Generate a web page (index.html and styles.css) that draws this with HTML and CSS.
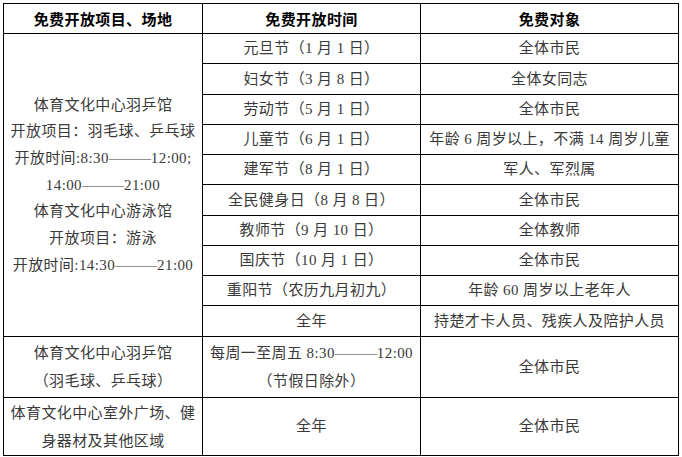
FILE: index.html
```html
<!DOCTYPE html>
<html lang="zh-CN">
<head>
<meta charset="utf-8">
<link rel="stylesheet" href="styles.css">
</head>
<body>
<div class="sheet">
  <div class="cell head">免费开放项目、场地</div>
  <div class="cell head">免费开放时间</div>
  <div class="cell head">免费对象</div>

  <div class="cell venue">
    <div>体育文化中心羽乒馆</div>
    <div>开放项目：羽毛球、乒乓球</div>
    <div>开放时间:8:30<span class="dash">——</span>12:00;</div>
    <div>14:00<span class="dash">——</span>21:00</div>
    <div>体育文化中心游泳馆</div>
    <div>开放项目：游泳</div>
    <div>开放时间:14:30<span class="dash">——</span>21:00</div>
  </div>

  <div class="cell">元旦节（1 月 1 日）</div><div class="cell">全体市民</div>
  <div class="cell">妇女节（3 月 8 日）</div><div class="cell">全体女同志</div>
  <div class="cell">劳动节（5 月 1 日）</div><div class="cell">全体市民</div>
  <div class="cell">儿童节（6 月 1 日）</div><div class="cell">年龄 6 周岁以上，不满 14 周岁儿童</div>
  <div class="cell">建军节（8 月 1 日）</div><div class="cell">军人、军烈属</div>
  <div class="cell">全民健身日（8 月 8 日）</div><div class="cell">全体市民</div>
  <div class="cell">教师节（9 月 10 日）</div><div class="cell">全体教师</div>
  <div class="cell">国庆节（10 月 1 日）</div><div class="cell">全体市民</div>
  <div class="cell">重阳节（农历九月初九）</div><div class="cell">年龄 60 周岁以上老年人</div>
  <div class="cell">全年</div><div class="cell">持楚才卡人员、残疾人及陪护人员</div>

  <div class="cell multi"><div>体育文化中心羽乒馆</div><div>（羽毛球、乒乓球）</div></div>
  <div class="cell multi"><div>每周一至周五 8:30<span class="dash">——</span>12:00</div><div>（节假日除外）</div></div>
  <div class="cell">全体市民</div>

  <div class="cell multi"><div>体育文化中心室外广场、健</div><div>身器材及其他区域</div></div>
  <div class="cell">全年</div>
  <div class="cell">全体市民</div>
</div>
</body>
</html>
```

FILE: styles.css
```css
html, body {
  margin: 0;
  padding: 0;
  background: #ffffff;
}

body {
  padding: 3px 0 0 3px;
}

.sheet {
  display: grid;
  grid-template-columns: 199px 218px 258px;
  grid-template-rows: 30px 30px 31px 30px 30px 30px 31px 30px 30px 30px 31px 61px 58px;
  width: 676px;
  box-sizing: border-box;
  border-top: 1px solid #000;
  border-left: 1px solid #000;
  font-family: "Liberation Serif", "Noto Sans CJK SC", serif;
  font-size: 15px;
  color: #3a3a3a;
  letter-spacing: 0.4px;
}

.cell {
  box-sizing: border-box;
  border-right: 1px solid #000;
  border-bottom: 1px solid #000;
  display: flex;
  flex-direction: column;
  align-items: center;
  justify-content: center;
  text-align: center;
  white-space: nowrap;
  line-height: 27px;
  overflow: hidden;
}

.head {
  font-family: "Noto Sans CJK SC", sans-serif;
  font-weight: 700;
  color: #000;
  font-size: 15px;
}

.venue {
  grid-row: 2 / 12;
  line-height: 26.7px;
}

.multi {
  line-height: 28px;
}

.dash {
  display: inline-block;
  letter-spacing: 0;
  transform: scaleX(1.4);
  margin: 0 6px;
}
```
